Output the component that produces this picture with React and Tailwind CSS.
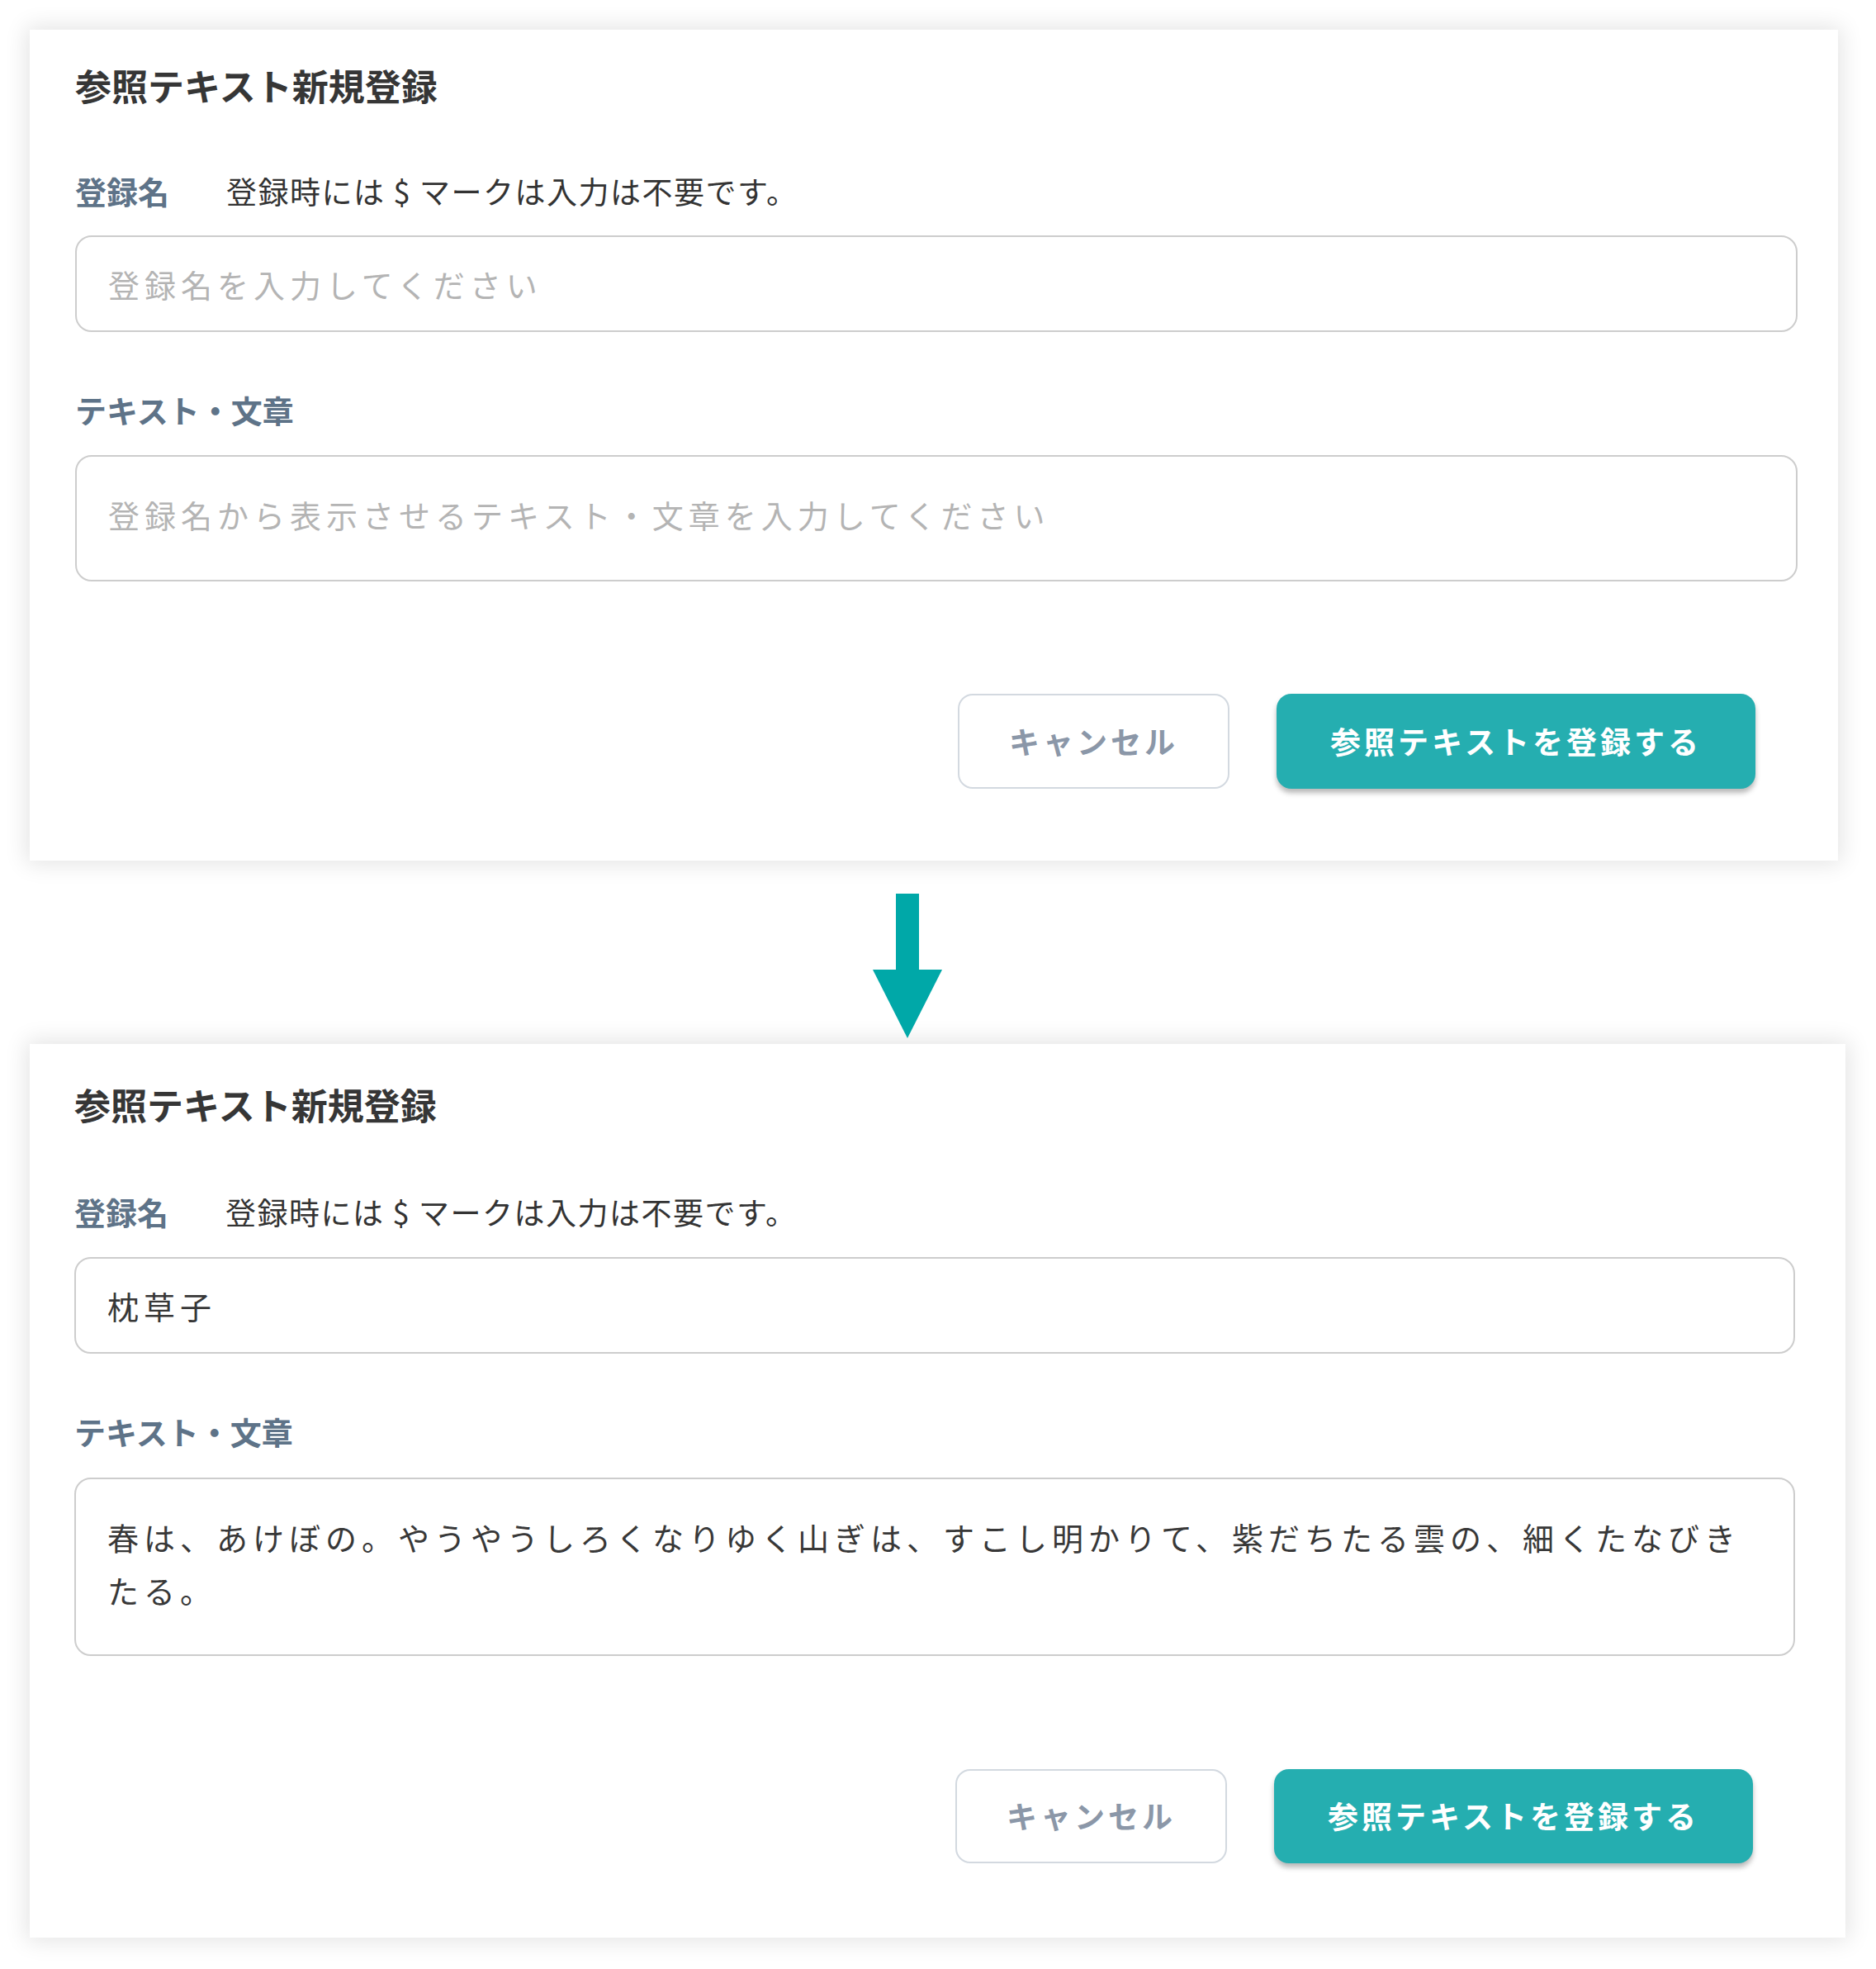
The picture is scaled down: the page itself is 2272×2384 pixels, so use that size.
import React from 'react';

// two cards differ only by a few pixels of spacing and the textarea height
const variants = {
  empty: {
    card: 'w-[2190px] pl-[55px] pr-[49px] pt-[45px] pb-[87px]',
    row: 'mt-[87px]',
    input: 'mt-[35px]',
    area: 'mt-[36px] h-[153px]',
    buttons: 'mt-[136px]',
    btn: 'h-[115px]',
  },
  filled: {
    card: 'w-[2199px] pl-[54px] pr-[61px] pt-[51px] pb-[90px]',
    row: 'mt-[89px]',
    input: 'mt-[36px]',
    area: 'mt-[37px] h-[216px]',
    buttons: 'mt-[137px]',
    btn: 'h-[114px]',
  },
};

const Card = ({ variant, name = '', text = '' }) => {
  const v = variants[variant];
  return (
    <div className={`bg-white shadow-[0_0_26px_4px_rgba(0,0,0,0.11)] flex flex-col ${v.card}`}>
      <h2 className="text-[44px] leading-[44px] font-bold text-[#363636]">参照テキスト新規登録</h2>

      <div className={`flex items-center h-[38px] ${v.row}`}>
        <span className="text-[38px] leading-[38px] font-bold text-[#5e7388] w-[183px]">登録名</span>
        <span className="text-[37px] leading-[38px] tracking-[1.5px] text-[#333333]">登録時には $ マークは入力は不要です。</span>
      </div>

      <input
        type="text"
        defaultValue={name}
        placeholder="登録名を入力してください"
        className={`h-[117px] w-full border-2 border-[#cdcdcd] rounded-[20px] px-[38px] text-[38px] tracking-[6px] text-[#383838] placeholder:text-[#b4b4b4] outline-none bg-white ${v.input}`}
      />

      <div className="text-[38px] leading-[38px] font-bold text-[#5e7388] mt-[75px]">テキスト・文章</div>

      <textarea
        readOnly
        defaultValue={text}
        placeholder="登録名から表示させるテキスト・文章を入力してください"
        className={`w-full border-2 border-[#cdcdcd] rounded-[20px] px-[38px] pt-[38px] text-[38px] leading-[64px] tracking-[6px] text-[#383838] placeholder:text-[#b4b4b4] outline-none resize-none overflow-hidden bg-white ${v.area}`}
      />

      <div className={`flex justify-end gap-[57px] pr-[51px] ${v.buttons}`}>
        <button className={`w-[329px] border-2 border-[#d3d9e0] rounded-[18px] bg-white text-[37px] font-bold tracking-[4px] text-[#8b97a8] ${v.btn}`}>
          キャンセル
        </button>
        <button className={`w-[580px] rounded-[18px] bg-[#25aeb0] text-[37px] font-bold tracking-[4px] text-white shadow-[0_5px_6px_rgba(0,0,0,0.28)] ${v.btn}`}>
          参照テキストを登録する
        </button>
      </div>
    </div>
  );
};

const App = () => {
  return (
    <div className="min-h-screen bg-white pl-[36px] pt-[36px] font-['Noto_Sans_CJK_JP','Noto_Sans',sans-serif]">
      <Card variant="empty" />

      <div className="ml-[1021px] mt-[40px] mb-[7px] w-[84px] h-[175px]">
        <svg width="84" height="175" viewBox="0 0 84 175">
          <rect x="28" y="0" width="28" height="93" fill="#00a8a8" />
          <polygon points="0,92 84,92 42,175" fill="#00a8a8" />
        </svg>
      </div>

      <Card
        variant="filled"
        name="枕草子"
        text="春は、あけぼの。やうやうしろくなりゆく山ぎは、すこし明かりて、紫だちたる雲の、細くたなびきたる。"
      />
    </div>
  );
};

export default App;
